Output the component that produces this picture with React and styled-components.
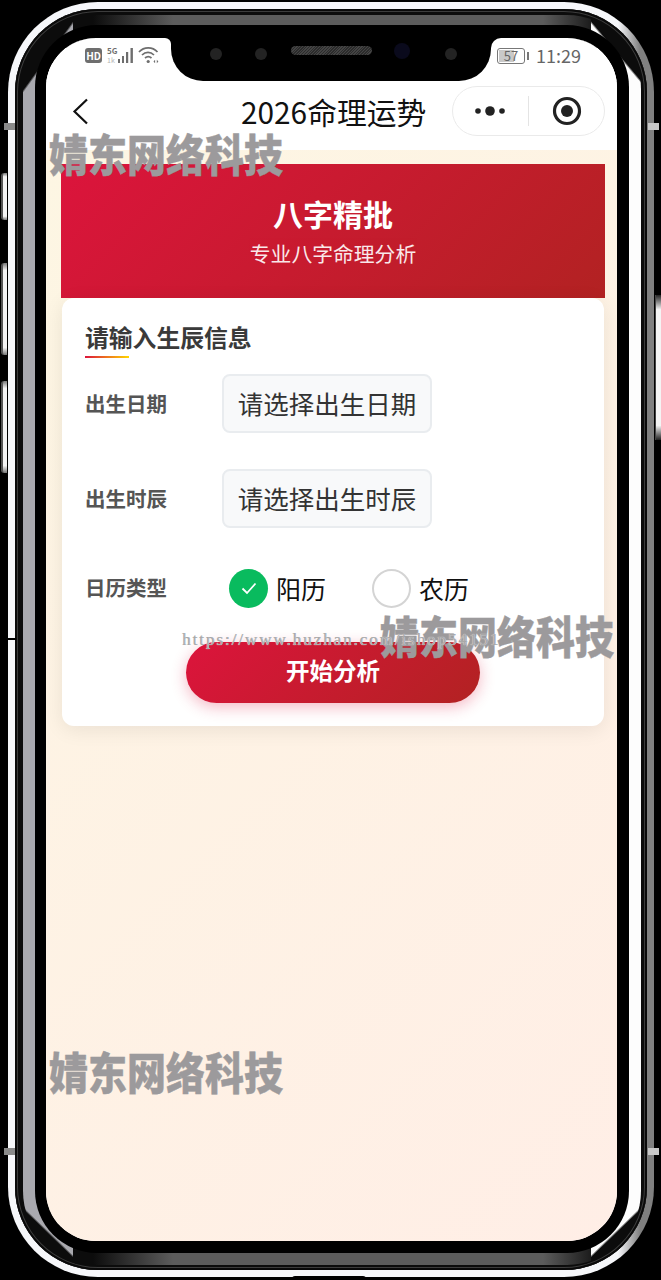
import styled, { createGlobalStyle } from "styled-components";

const GlobalStyle = createGlobalStyle`
	html, body {
		margin: 0;
		padding: 0;
		background: #000;
	}
	* {
		box-sizing: border-box;
	}
`;

const FONT = `"Noto Sans CJK SC", "Noto Sans", sans-serif`;

function App() {
	return (
		<Page>
			<GlobalStyle />
			<SideKey $left={1} $top={173} $height={47} />
			<SideKey $left={1} $top={263} $height={92} />
			<SideKey $left={1} $top={381} $height={92} />
			<RightKey />
			<FrameTab $left={4} $top={123} />
			<FrameTab $left={4} $top={1148} />
			<FrameTab $left={648} $top={123} $light />
			<FrameTab $left={648} $top={1148} $light />
			<AntennaLine />
			<BottomTab />

			<Frame>
				<Bezel>
					<Glass>
						<Screen>
							<StatusRow>
								<StatusLeft>
									<HdBadge>HD</HdBadge>
									<NetStack>
										<span>5G</span>
										<small>1k</small>
									</NetStack>
									<svg width="17" height="17" viewBox="0 0 17 17" fill="#6e6e6e">
										<rect x="1" y="12" width="2" height="4" />
										<rect x="5" y="9" width="2" height="7" />
										<rect x="9" y="5" width="2.2" height="11" />
										<rect x="13.5" y="1" width="2.4" height="15" />
									</svg>
									<WifiIcon width="21" height="18" viewBox="0 0 21 18" fill="none" stroke="#6e6e6e">
										<path d="M1 6 C6 0.5 14.5 0.5 19.500 6" strokeWidth="1.7" />
										<path d="M4 9 C7.500 5.500 12.500 5.500 16 9" strokeWidth="1.7" />
										<path d="M7 12 C9 10.300 11.500 10.300 13.500 12" strokeWidth="1.7" />
										<circle cx="10.200" cy="15.500" r="1.600" fill="#6e6e6e" stroke="none" />
										<path d="M15.500 15.500 l1.600 -1.700 v3.400 z M18.800 17.200 v-3.400 l1.600 1.700 z" fill="#6e6e6e" stroke="none" />
									</WifiIcon>
								</StatusLeft>
								<Notch>
									<SensorDot />
									<SensorDot />
									<Speaker />
									<Camera />
									<SensorDot />
								</Notch>
								<StatusRight>
									<Battery>
										<BatteryFill />
										<BatteryText>57</BatteryText>
									</Battery>
									<BatteryNub />
									<Clock>11:29</Clock>
								</StatusRight>
							</StatusRow>

							<NavBar>
								<BackButton>
									<svg width="17" height="27" viewBox="0 0 17 27" fill="none" stroke="#111" strokeWidth="2.200">
										<path d="M15 1.500 L2.500 13.500 L15 25.500" />
									</svg>
								</BackButton>
								<NavTitle>2026命理运势</NavTitle>
								<Capsule>
									<CapsuleSide>
										<svg width="34" height="12" viewBox="0 0 34 12" fill="#222">
											<circle cx="4" cy="6" r="2.800" />
											<circle cx="16" cy="6" r="4.800" />
											<circle cx="28" cy="6" r="2.800" />
										</svg>
									</CapsuleSide>
									<CapsuleDivider />
									<CapsuleSide>
										<svg width="30" height="30" viewBox="0 0 30 30">
											<circle cx="15" cy="15" r="12.500" fill="none" stroke="#222" strokeWidth="3.200" />
											<circle cx="15" cy="15" r="6" fill="#222" />
										</svg>
									</CapsuleSide>
								</Capsule>
							</NavBar>

							<Body>
								<Hero>
									<HeroTitle>八字精批</HeroTitle>
									<HeroSub>专业八字命理分析</HeroSub>
								</Hero>
								<Card>
									<CardTitle>请输入生辰信息</CardTitle>
									<TitleRule />
									<FieldRow>
										<FieldLabel>出生日期</FieldLabel>
										<PickerBox>请选择出生日期</PickerBox>
									</FieldRow>
									<FieldRow>
										<FieldLabel>出生时辰</FieldLabel>
										<PickerBox>请选择出生时辰</PickerBox>
									</FieldRow>
									<RadioRow>
										<FieldLabel>日历类型</FieldLabel>
										<RadioGroup>
											<RadioItem>
												<RadioCircle $checked>
													<svg width="18" height="18" viewBox="0 0 18 18" fill="none" stroke="#fff" strokeWidth="1.800">
														<path d="M2.500 9.500 L7 14 L15.500 4.500" />
													</svg>
												</RadioCircle>
												<RadioText>阳历</RadioText>
											</RadioItem>
											<RadioItem>
												<RadioCircle />
												<RadioText>农历</RadioText>
											</RadioItem>
										</RadioGroup>
									</RadioRow>
									<SubmitButton>开始分析</SubmitButton>
								</Card>
							</Body>
						</Screen>
					</Glass>
				</Bezel>
			</Frame>

			<Watermark $left={49} $top={124}>婧东网络科技</Watermark>
			<Watermark $left={380} $top={606}>婧东网络科技</Watermark>
			<Watermark $left={49} $top={1042}>婧东网络科技</Watermark>
			<UrlMark>https://www.huzhan.com/ishop54151</UrlMark>
		</Page>
	);
}

const Page = styled.div`
	position: relative;
	width: 661px;
	height: 1280px;
	padding: 2px 7px 3px 8px;
	background: #000;
	overflow: hidden;
	font-family: ${FONT};
`;

const Frame = styled.div`
	width: 100%;
	height: 100%;
	padding: 6px 6px 5px 8px;
	border: solid transparent;
	border-width: 7px;
	border-radius: 90px;
	background:
		linear-gradient(#0c0c0c, #0c0c0c) padding-box,
		linear-gradient(90deg, #f6f7fa 0 610px, #808080 632px) border-box;
	box-shadow: inset 0 0 0 2px #0a0a0a, inset 0 0 0 3px #3c3c3c;
`;

const Bezel = styled.div`
	width: 100%;
	height: 100%;
	border: solid transparent;
	border-width: 10px 12px 12px;
	border-radius: 74px;
	background:
		linear-gradient(126deg, #0c0c0c 44px, #a9a9af 46px) left top / 50px 80px no-repeat border-box,
		linear-gradient(44deg, #0c0c0c 40px, #a9a9af 42px) left bottom / 50px 80px no-repeat border-box,
		linear-gradient(230deg, #0c0c0c 42px, #fdfdfd 44px) right top / 50px 80px no-repeat border-box,
		linear-gradient(316deg, #0c0c0c 40px, #fdfdfd 42px) right bottom / 50px 80px no-repeat border-box,
		linear-gradient(90deg, #a9a9af 0 12px, #0c0c0c 12px 70px, #5c5c5c 150px, #5c5c5c 520px, #0c0c0c 580px, #0c0c0c 606px, #fdfdfd 606px) border-box;
`;

const Glass = styled.div`
	width: 100%;
	height: 100%;
	padding: 13px 12px 12px 11px;
	background: #000;
	border-radius: 62px;
`;

const Screen = styled.div`
	display: flex;
	flex-direction: column;
	width: 100%;
	height: 100%;
	border-radius: 50px;
	overflow: hidden;
	background: #fff;
`;

const StatusRow = styled.div`
	display: grid;
	grid-template-columns: 125px 320px 126px;
	height: 43px;
	background: linear-gradient(#000 0 10px, #fff 10px);
`;

const StatusLeft = styled.div`
	display: flex;
	align-items: flex-start;
	padding: 9px 0 0 39px;
	background: #fff;
	border-top-right-radius: 6px;
	svg {
		flex: none;
	}
`;

const HdBadge = styled.div`
	width: 17px;
	height: 15px;
	margin-top: 1px;
	border-radius: 3px;
	background: #6e6e6e;
	color: #fff;
	font-size: 10px;
	font-weight: 700;
	line-height: 15px;
	text-align: center;
`;

const NetStack = styled.div`
	display: flex;
	flex-direction: column;
	width: 10px;
	margin-left: 5px;
	color: #6e6e6e;
	line-height: 8px;
	span {
		font-size: 8px;
		font-weight: 700;
	}
	small {
		margin-top: 1px;
		font-size: 7px;
		color: #b5b5b5;
	}
`;

const WifiIcon = styled.svg`
	margin: -1px 0 0 4px;
`;

const Notch = styled.div`
	display: flex;
	align-items: flex-start;
	padding: 10px 0 0 39px;
	background: #000;
	border-radius: 0 0 32px 32px;
`;

const SensorDot = styled.div`
	flex: none;
	width: 12px;
	height: 12px;
	margin-right: 33px;
	border-radius: 50%;
	background: #232323;
	&:nth-child(2) {
		margin-right: 24px;
	}
`;

const Speaker = styled.div`
	flex: none;
	width: 81px;
	height: 9px;
	margin: -2px 22px 0 0;
	border-radius: 5px;
	background: repeating-linear-gradient(135deg, #444 0 1px, #2b2b2b 1px 2px);
`;

const Camera = styled.div`
	flex: none;
	width: 16px;
	height: 16px;
	margin: -5px 35px 0 0;
	border-radius: 50%;
	background: #0a0a1c;
`;

const StatusRight = styled.div`
	display: flex;
	align-items: flex-start;
	padding: 9px 0 0 6px;
	background: #fff;
	border-top-left-radius: 10px;
`;

const Battery = styled.div`
	position: relative;
	width: 28px;
	height: 16px;
	margin-top: 1px;
	border: 1.5px solid #777;
	border-radius: 3px;
	padding: 1px;
`;

const BatteryFill = styled.div`
	width: 62%;
	height: 100%;
	background: #c9c9c9;
`;

const BatteryText = styled.span`
	position: absolute;
	inset: 0;
	color: #666;
	font-size: 13px;
	line-height: 13px;
	text-align: center;
`;

const BatteryNub = styled.div`
	width: 2px;
	height: 8px;
	margin: 5px 0 0 2px;
	background: #777;
`;

const Clock = styled.div`
	margin: -5px 0 0 7px;
	color: #666;
	font-size: 18px;
	line-height: 27px;
`;

const NavBar = styled.div`
	display: grid;
	grid-template-columns: 195px auto 1fr;
	height: 69px;
	padding-right: 12px;
	background: #fff;
`;

const BackButton = styled.div`
	display: flex;
	padding: 17px 0 0 26px;
`;

const NavTitle = styled.div`
	color: #111;
	font-size: 29.800px;
	line-height: 60px;
	white-space: nowrap;
`;

const Capsule = styled.div`
	justify-self: end;
	display: flex;
	align-items: center;
	width: 153px;
	height: 50px;
	margin-top: 5px;
	border: 1px solid #eaeaea;
	border-radius: 25px;
	background: #fff;
`;

const CapsuleSide = styled.div`
	flex: 1;
	display: flex;
	justify-content: center;
	align-items: center;
`;

const CapsuleDivider = styled.div`
	width: 1px;
	height: 30px;
	background: #e4e4e4;
`;

const Body = styled.div`
	flex: 1;
	padding: 14px 12px 0 15px;
	background: linear-gradient(135deg, #fdf6e3 0%, #ffeee6 100%);
`;

const Hero = styled.div`
	display: flex;
	flex-direction: column;
	align-items: center;
	height: 134px;
	padding-top: 28px;
	background: linear-gradient(135deg, #dc143c, #b22222);
	color: #fff;
`;

const HeroTitle = styled.div`
	font-size: 30px;
	font-weight: 700;
	line-height: 42px;
`;

const HeroSub = styled.div`
	margin-top: 4px;
	font-size: 20.800px;
	line-height: 30px;
	opacity: 0.9;
`;

const Card = styled.div`
	margin: 0 1px;
	padding: 22px 23px 23px;
	border-radius: 12px;
	background: #fff;
	box-shadow: 0 4px 20px rgba(0, 0, 0, 0.08);
`;

const CardTitle = styled.div`
	padding-bottom: 2px;
	color: #3a3a3a;
	font-size: 23.800px;
	font-weight: 700;
	line-height: 34px;
`;

const TitleRule = styled.div`
	width: 44px;
	height: 2px;
	background: linear-gradient(90deg, #dc143c, #ffd700);
`;

const FieldRow = styled.div`
	display: flex;
	align-items: center;
	margin-top: 16px;
	& + & {
		margin-top: 36px;
	}
`;

const FieldLabel = styled.div`
	flex: none;
	width: 137px;
	padding-bottom: 2px;
	color: #555;
	font-size: 20.500px;
	font-weight: 700;
	line-height: 30px;
`;

const PickerBox = styled.div`
	width: 210px;
	height: 59px;
	border: 2px solid #e9ecef;
	border-radius: 8px;
	background: #f8f9fa;
	color: #333;
	font-size: 25.500px;
	line-height: 53px;
	text-align: center;
	white-space: nowrap;
`;

const RadioRow = styled.div`
	display: flex;
	align-items: center;
	margin-top: 40px;
`;

const RadioGroup = styled.div`
	display: flex;
	gap: 46px;
	padding-left: 7px;
`;

const RadioItem = styled.div`
	display: flex;
	align-items: center;
	gap: 8px;
`;

const RadioCircle = styled.div`
	display: flex;
	justify-content: center;
	align-items: center;
	width: 39px;
	height: 39px;
	border: ${(p) => (p.$checked ? "none" : "2px solid #d4d4d4")};
	border-radius: 50%;
	background: ${(p) => (p.$checked ? "#09bb5e" : "#fff")};
`;

const RadioText = styled.div`
	padding-top: 1px;
	color: #111;
	font-size: 25px;
	line-height: 39px;
`;

const SubmitButton = styled.div`
	width: 294px;
	height: 61px;
	margin: 34px auto 0;
	border-radius: 31px;
	background: linear-gradient(135deg, #dc143c, #b22222);
	box-shadow: 0 4px 15px rgba(220, 20, 60, 0.3);
	color: #fff;
	font-size: 23.500px;
	font-weight: 700;
	line-height: 57px;
	text-align: center;
`;

const Watermark = styled.div`
	position: absolute;
	left: ${(p) => p.$left}px;
	top: ${(p) => p.$top}px;
	color: #9c9a9c;
	font-size: 39px;
	font-weight: 900;
	line-height: 58px;
	white-space: nowrap;
	-webkit-text-stroke: 0.4px #9c9a9c;
	transform: scaleY(1.14);
`;

const UrlMark = styled.div`
	position: absolute;
	left: 182px;
	top: 631px;
	color: #a8a8a8;
	font-family: "Liberation Serif", serif;
	font-size: 17px;
	letter-spacing: 1.950px;
	line-height: 18px;
	text-shadow: 0 0 1px #fff, 0.4px 0 0 #999;
	white-space: nowrap;
`;

const SideKey = styled.div`
	position: absolute;
	left: ${(p) => p.$left}px;
	top: ${(p) => p.$top}px;
	width: 6px;
	height: ${(p) => p.$height}px;
	border-left: 2px solid #555;
	border-radius: 3px 0 0 3px;
	background: linear-gradient(#777, #f4f4f4 8%, #f4f4f4 92%, #777);
`;

const RightKey = styled.div`
	position: absolute;
	left: 655px;
	top: 295px;
	width: 6px;
	height: 145px;
	border-left: 1px solid #444;
	background: linear-gradient(#222, #f4f4f4 10%, #f4f4f4 90%, #222);
`;

const FrameTab = styled.div`
	position: absolute;
	left: ${(p) => p.$left}px;
	top: ${(p) => p.$top}px;
	width: 11px;
	height: 7px;
	background: ${(p) => (p.$light ? "#c8c8c8" : "#8a8a8a")};
`;

const AntennaLine = styled.div`
	position: absolute;
	left: 0;
	top: 638px;
	width: 16px;
	height: 2px;
	background: #000;
`;

const BottomTab = styled.div`
	position: absolute;
	left: 292px;
	top: 1276px;
	width: 74px;
	height: 4px;
	border-radius: 3px 3px 0 0;
	background: #000;
`;

export default App;
